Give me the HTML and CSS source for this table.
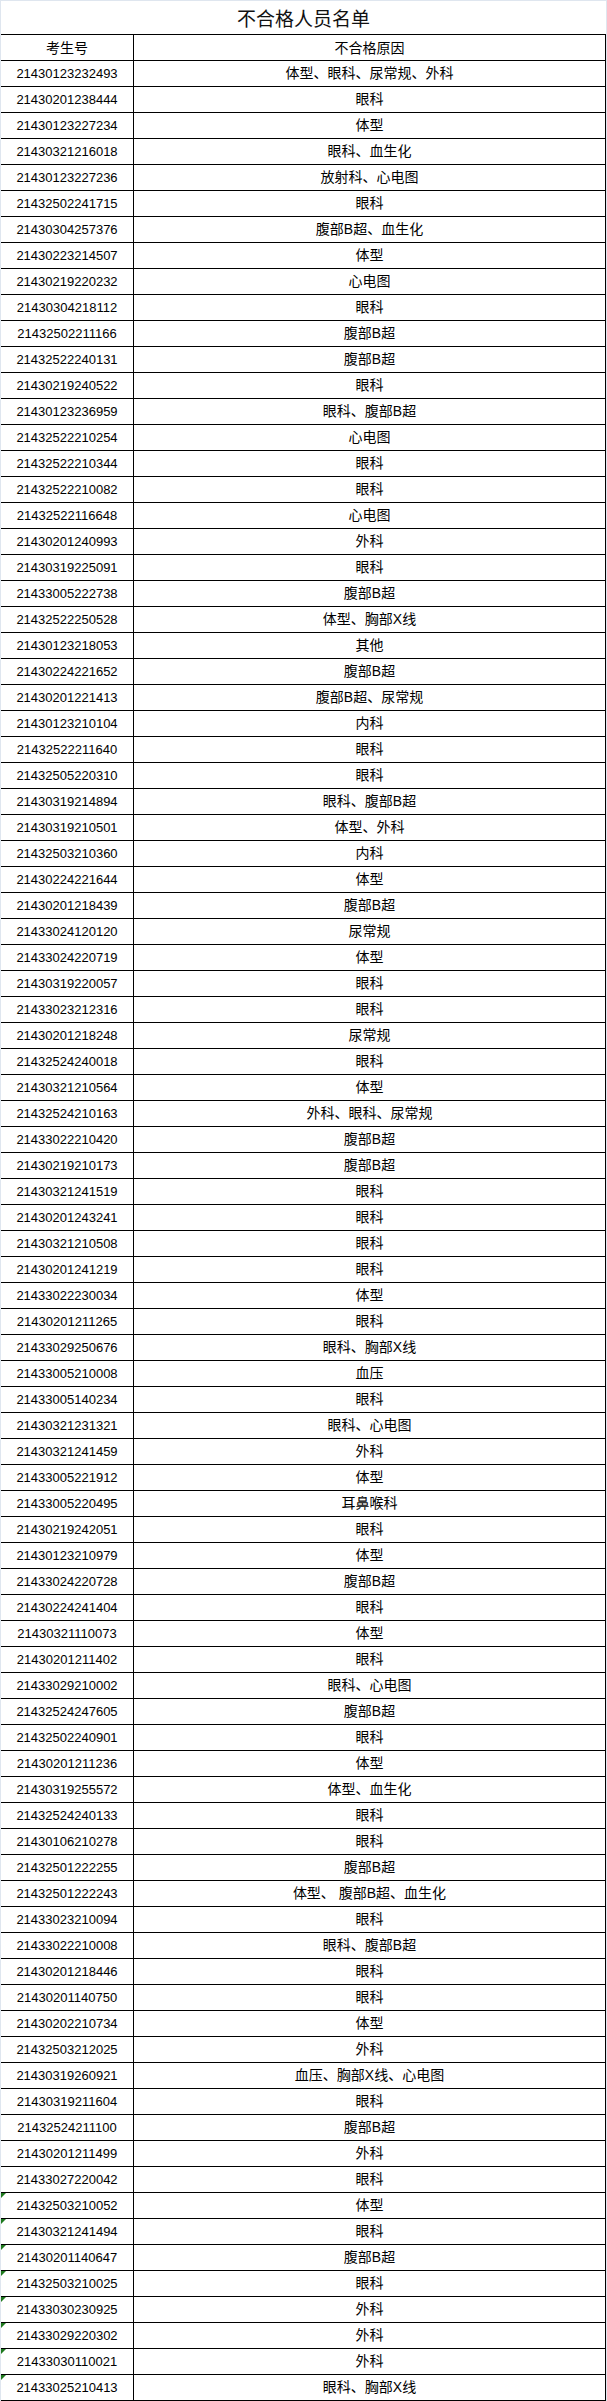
FILE: index.html
```html
<!DOCTYPE html>
<html lang="zh-CN">
<head>
<meta charset="utf-8">
<title>不合格人员名单</title>
<link rel="stylesheet" href="styles.css">
</head>
<body>
<div class="sheet">
  <div class="title">不合格人员名单</div>
  <div class="row head"><div class="c id">考生号</div><div class="c reason">不合格原因</div></div>
  <div class="row"><div class="c id">21430123232493</div><div class="c reason">体型、眼科、尿常规、外科</div></div>
  <div class="row"><div class="c id">21430201238444</div><div class="c reason">眼科</div></div>
  <div class="row"><div class="c id">21430123227234</div><div class="c reason">体型</div></div>
  <div class="row"><div class="c id">21430321216018</div><div class="c reason">眼科、血生化</div></div>
  <div class="row"><div class="c id">21430123227236</div><div class="c reason">放射科、心电图</div></div>
  <div class="row"><div class="c id">21432502241715</div><div class="c reason">眼科</div></div>
  <div class="row"><div class="c id">21430304257376</div><div class="c reason">腹部B超、血生化</div></div>
  <div class="row"><div class="c id">21430223214507</div><div class="c reason">体型</div></div>
  <div class="row"><div class="c id">21430219220232</div><div class="c reason">心电图</div></div>
  <div class="row"><div class="c id">21430304218112</div><div class="c reason">眼科</div></div>
  <div class="row"><div class="c id">21432502211166</div><div class="c reason">腹部B超</div></div>
  <div class="row"><div class="c id">21432522240131</div><div class="c reason">腹部B超</div></div>
  <div class="row"><div class="c id">21430219240522</div><div class="c reason">眼科</div></div>
  <div class="row"><div class="c id">21430123236959</div><div class="c reason">眼科、腹部B超</div></div>
  <div class="row"><div class="c id">21432522210254</div><div class="c reason">心电图</div></div>
  <div class="row"><div class="c id">21432522210344</div><div class="c reason">眼科</div></div>
  <div class="row"><div class="c id">21432522210082</div><div class="c reason">眼科</div></div>
  <div class="row"><div class="c id">21432522116648</div><div class="c reason">心电图</div></div>
  <div class="row"><div class="c id">21430201240993</div><div class="c reason">外科</div></div>
  <div class="row"><div class="c id">21430319225091</div><div class="c reason">眼科</div></div>
  <div class="row"><div class="c id">21433005222738</div><div class="c reason">腹部B超</div></div>
  <div class="row"><div class="c id">21432522250528</div><div class="c reason">体型、胸部X线</div></div>
  <div class="row"><div class="c id">21430123218053</div><div class="c reason">其他</div></div>
  <div class="row"><div class="c id">21430224221652</div><div class="c reason">腹部B超</div></div>
  <div class="row"><div class="c id">21430201221413</div><div class="c reason">腹部B超、尿常规</div></div>
  <div class="row"><div class="c id">21430123210104</div><div class="c reason">内科</div></div>
  <div class="row"><div class="c id">21432522211640</div><div class="c reason">眼科</div></div>
  <div class="row"><div class="c id">21432505220310</div><div class="c reason">眼科</div></div>
  <div class="row"><div class="c id">21430319214894</div><div class="c reason">眼科、腹部B超</div></div>
  <div class="row"><div class="c id">21430319210501</div><div class="c reason">体型、外科</div></div>
  <div class="row"><div class="c id">21432503210360</div><div class="c reason">内科</div></div>
  <div class="row"><div class="c id">21430224221644</div><div class="c reason">体型</div></div>
  <div class="row"><div class="c id">21430201218439</div><div class="c reason">腹部B超</div></div>
  <div class="row"><div class="c id">21433024120120</div><div class="c reason">尿常规</div></div>
  <div class="row"><div class="c id">21433024220719</div><div class="c reason">体型</div></div>
  <div class="row"><div class="c id">21430319220057</div><div class="c reason">眼科</div></div>
  <div class="row"><div class="c id">21433023212316</div><div class="c reason">眼科</div></div>
  <div class="row"><div class="c id">21430201218248</div><div class="c reason">尿常规</div></div>
  <div class="row"><div class="c id">21432524240018</div><div class="c reason">眼科</div></div>
  <div class="row"><div class="c id">21430321210564</div><div class="c reason">体型</div></div>
  <div class="row"><div class="c id">21432524210163</div><div class="c reason">外科、眼科、尿常规</div></div>
  <div class="row"><div class="c id">21433022210420</div><div class="c reason">腹部B超</div></div>
  <div class="row"><div class="c id">21430219210173</div><div class="c reason">腹部B超</div></div>
  <div class="row"><div class="c id">21430321241519</div><div class="c reason">眼科</div></div>
  <div class="row"><div class="c id">21430201243241</div><div class="c reason">眼科</div></div>
  <div class="row"><div class="c id">21430321210508</div><div class="c reason">眼科</div></div>
  <div class="row"><div class="c id">21430201241219</div><div class="c reason">眼科</div></div>
  <div class="row"><div class="c id">21433022230034</div><div class="c reason">体型</div></div>
  <div class="row"><div class="c id">21430201211265</div><div class="c reason">眼科</div></div>
  <div class="row"><div class="c id">21433029250676</div><div class="c reason">眼科、胸部X线</div></div>
  <div class="row"><div class="c id">21433005210008</div><div class="c reason">血压</div></div>
  <div class="row"><div class="c id">21433005140234</div><div class="c reason">眼科</div></div>
  <div class="row"><div class="c id">21430321231321</div><div class="c reason">眼科、心电图</div></div>
  <div class="row"><div class="c id">21430321241459</div><div class="c reason">外科</div></div>
  <div class="row"><div class="c id">21433005221912</div><div class="c reason">体型</div></div>
  <div class="row"><div class="c id">21433005220495</div><div class="c reason">耳鼻喉科</div></div>
  <div class="row"><div class="c id">21430219242051</div><div class="c reason">眼科</div></div>
  <div class="row"><div class="c id">21430123210979</div><div class="c reason">体型</div></div>
  <div class="row"><div class="c id">21433024220728</div><div class="c reason">腹部B超</div></div>
  <div class="row"><div class="c id">21430224241404</div><div class="c reason">眼科</div></div>
  <div class="row"><div class="c id">21430321110073</div><div class="c reason">体型</div></div>
  <div class="row"><div class="c id">21430201211402</div><div class="c reason">眼科</div></div>
  <div class="row"><div class="c id">21433029210002</div><div class="c reason">眼科、心电图</div></div>
  <div class="row"><div class="c id">21432524247605</div><div class="c reason">腹部B超</div></div>
  <div class="row"><div class="c id">21432502240901</div><div class="c reason">眼科</div></div>
  <div class="row"><div class="c id">21430201211236</div><div class="c reason">体型</div></div>
  <div class="row"><div class="c id">21430319255572</div><div class="c reason">体型、血生化</div></div>
  <div class="row"><div class="c id">21432524240133</div><div class="c reason">眼科</div></div>
  <div class="row"><div class="c id">21430106210278</div><div class="c reason">眼科</div></div>
  <div class="row"><div class="c id">21432501222255</div><div class="c reason">腹部B超</div></div>
  <div class="row"><div class="c id">21432501222243</div><div class="c reason">体型、 腹部B超、血生化</div></div>
  <div class="row"><div class="c id">21433023210094</div><div class="c reason">眼科</div></div>
  <div class="row"><div class="c id">21433022210008</div><div class="c reason">眼科、腹部B超</div></div>
  <div class="row"><div class="c id">21430201218446</div><div class="c reason">眼科</div></div>
  <div class="row"><div class="c id">21430201140750</div><div class="c reason">眼科</div></div>
  <div class="row"><div class="c id">21430202210734</div><div class="c reason">体型</div></div>
  <div class="row"><div class="c id">21432503212025</div><div class="c reason">外科</div></div>
  <div class="row"><div class="c id">21430319260921</div><div class="c reason">血压、胸部X线、心电图</div></div>
  <div class="row"><div class="c id">21430319211604</div><div class="c reason">眼科</div></div>
  <div class="row"><div class="c id">21432524211100</div><div class="c reason">腹部B超</div></div>
  <div class="row"><div class="c id">21430201211499</div><div class="c reason">外科</div></div>
  <div class="row"><div class="c id">21433027220042</div><div class="c reason">眼科</div></div>
  <div class="row"><div class="c id flag">21432503210052</div><div class="c reason">体型</div></div>
  <div class="row"><div class="c id flag">21430321241494</div><div class="c reason">眼科</div></div>
  <div class="row"><div class="c id flag">21430201140647</div><div class="c reason">腹部B超</div></div>
  <div class="row"><div class="c id flag">21432503210025</div><div class="c reason">眼科</div></div>
  <div class="row"><div class="c id flag">21433030230925</div><div class="c reason">外科</div></div>
  <div class="row"><div class="c id flag">21433029220302</div><div class="c reason">外科</div></div>
  <div class="row"><div class="c id flag">21433030110021</div><div class="c reason">外科</div></div>
  <div class="row"><div class="c id flag">21433025210413</div><div class="c reason">眼科、胸部X线</div></div>
</div>
</body>
</html>
```
FILE: styles.css
```css
* { box-sizing: border-box; }
html, body { margin: 0; padding: 0; }
body {
  background: #dfe6ef;
  font-family: "Liberation Sans", "Noto Sans CJK SC", sans-serif;
  color: #000;
}
.sheet {
  margin: 1px 0 0 1px;
  width: 605px;
  background: #fff;
}
.title {
  height: 34px;
  border-bottom: 1px solid #000;
  text-align: center;
  font-family: "Noto Sans CJK SC", sans-serif;
  font-size: 19px;
  line-height: 33px;
  color: #111;
}
.row {
  display: grid;
  grid-template-columns: 133px 1fr;
  height: 26px;
  border-bottom: 1px solid #000;
  border-right: 1px solid #000;
}
.c {
  text-align: center;
  line-height: 25px;
  white-space: nowrap;
}
.id {
  position: relative;
  border-right: 1px solid #000;
  font-family: "Liberation Sans", sans-serif;
  font-size: 13px;
}
.reason {
  font-family: "Liberation Sans", "Noto Sans CJK SC", sans-serif;
  font-size: 14px;
}
.head .c {
  font-family: "Noto Sans CJK SC", sans-serif;
  font-size: 14px;
}
.flag::before {
  content: "";
  position: absolute;
  left: 0;
  top: 0;
  width: 0;
  height: 0;
  border-top: 5px solid #1f7a1f;
  border-right: 5px solid transparent;
}
```
